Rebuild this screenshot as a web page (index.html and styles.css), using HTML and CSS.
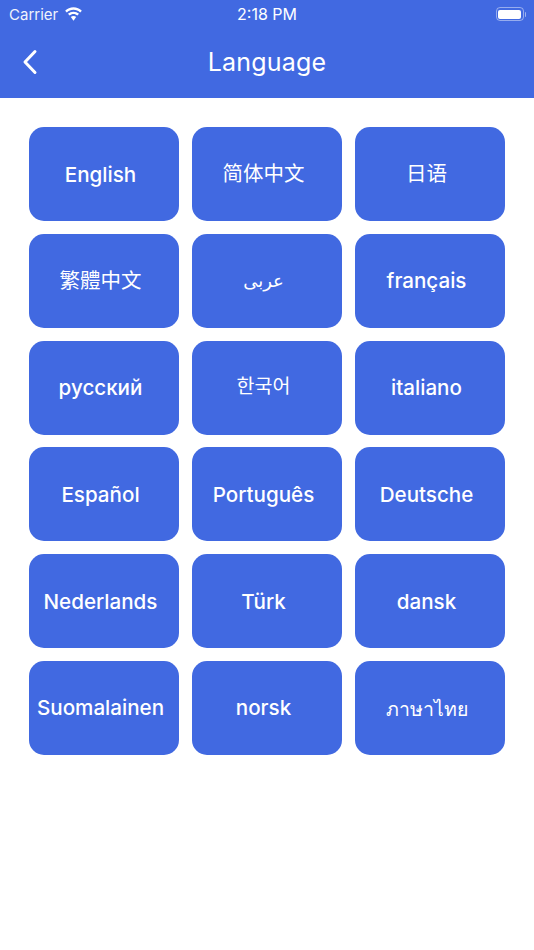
FILE: index.html
```html
<!DOCTYPE html>
<html lang="en">
<head>
<meta charset="utf-8">
<title>Language</title>
<link rel="stylesheet" href="styles.css">
</head>
<body>
<header class="header">
  <div class="status">
    <div class="status-left">
      <span class="carrier">Carrier</span>
      <svg class="wifi" width="19" height="14" viewBox="0 0 20 14"><path fill="#fff" d="M10 2.600c2.700 0 5.200 1 7 2.800l1.800-1.800C16.500 1.300 13.400 0 10 0S3.500 1.300 1.200 3.600L3 5.400c1.800-1.800 4.300-2.800 7-2.800z"/><path fill="#fff" d="M10 7c1.600 0 3 .6 4.100 1.600l1.700-1.800C14.200 5.300 12.200 4.500 10 4.500s-4.200.8-5.800 2.300l1.700 1.800C7 7.600 8.400 7 10 7z"/><path fill="#fff" d="M10 9c-1.100 0-2.100.4-2.800 1.100L10 14l2.800-3.900C12.100 9.400 11.100 9 10 9z"/></svg>
    </div>
    <span class="time">2:18 PM</span>
    <div class="battery"><span class="battery-body"><span class="battery-fill"></span></span><span class="battery-cap"></span></div>
  </div>
  <div class="nav">
    <svg class="back" width="16" height="26" viewBox="0 0 16 26"><path d="M13 2.500 3 13l10 10.500" fill="none" stroke="#fff" stroke-width="3" stroke-linecap="round" stroke-linejoin="round"/></svg>
    <h1 class="title">Language</h1>
  </div>
</header>
<main class="grid">
  <button class="lang">English</button>
  <button class="lang cjk" lang="zh-CN">简体中文</button>
  <button class="lang cjk" lang="zh-CN">日语</button>
  <button class="lang cjk" lang="zh-TW">繁體中文</button>
  <button class="lang arabic" lang="ar">عربى</button>
  <button class="lang">français</button>
  <button class="lang">русский</button>
  <button class="lang korean" lang="ko">한국어</button>
  <button class="lang">italiano</button>
  <button class="lang">Español</button>
  <button class="lang">Português</button>
  <button class="lang">Deutsche</button>
  <button class="lang">Nederlands</button>
  <button class="lang">Türk</button>
  <button class="lang">dansk</button>
  <button class="lang">Suomalainen</button>
  <button class="lang">norsk</button>
  <button class="lang thai" lang="th">ภาษาไทย</button>
</main>
</body>
</html>
```
FILE: styles.css
```css
* { box-sizing: border-box; }
html, body { margin: 0; padding: 0; }
body {
  width: 534px;
  height: 950px;
  background: #fff;
  font-family: Inter, "Noto Sans", "Noto Sans CJK SC", sans-serif;
  color: #fff;
  overflow: hidden;
}
.header { height: 98px; background: #4169e1; display: flex; flex-direction: column; }
.status {
  height: 28px;
  padding: 0 8px 0 9px;
  display: flex;
  align-items: center;
  justify-content: space-between;
  position: relative;
  font-size: 15px;
}
.status-left { display: flex; align-items: center; gap: 6px; }
.carrier { opacity: .92; font-weight: 400; }
.wifi { margin-top: -1px; }
.time {
  position: absolute;
  left: 0;
  right: 0;
  text-align: center;
  font-size: 16px;
  font-weight: 400;
}
.battery { display: flex; align-items: center; gap: 1px; }
.battery-body {
  width: 28px;
  height: 14px;
  border: 1px solid rgba(255,255,255,.45);
  border-radius: 4px;
  padding: 1.500px;
  display: block;
}
.battery-fill { display: block; height: 100%; background: #fff; border-radius: 2px; }
.battery-cap { width: 1.500px; height: 5px; background: rgba(255,255,255,.5); border-radius: 0 1px 1px 0; }
.nav {
  flex: 1;
  position: relative;
  display: flex;
  align-items: center;
  justify-content: center;
  padding-bottom: 2px;
}
.back { position: absolute; left: 21.500px; top: 21px; }
.title { margin: 0; font-size: 25px; font-weight: 400; letter-spacing: .2px; }
.grid {
  padding: 29px 29px 0;
  display: grid;
  grid-template-columns: repeat(3, 150px);
  grid-auto-rows: 94px;
  column-gap: 13px;
  row-gap: 12.800px;
}
.lang {
  border: 0;
  border-radius: 15px;
  background: #4169e1;
  color: #fff;
  font: 450 20.600px Inter, sans-serif;
  padding: 0 7px 0 0;
  white-space: nowrap;
  display: flex;
  align-items: center;
  justify-content: center;
}
.cjk { font: 400 20.500px "Noto Sans CJK SC", sans-serif; padding-bottom: 4px; }
.korean { font: 400 19.500px "Noto Sans CJK KR", sans-serif; padding-bottom: 6px; }
.arabic { font: 400 18px "DejaVu Sans", sans-serif; }
.thai { font: 400 19.500px "Noto Sans", "DejaVu Sans", sans-serif; padding-top: 3px; }
```
